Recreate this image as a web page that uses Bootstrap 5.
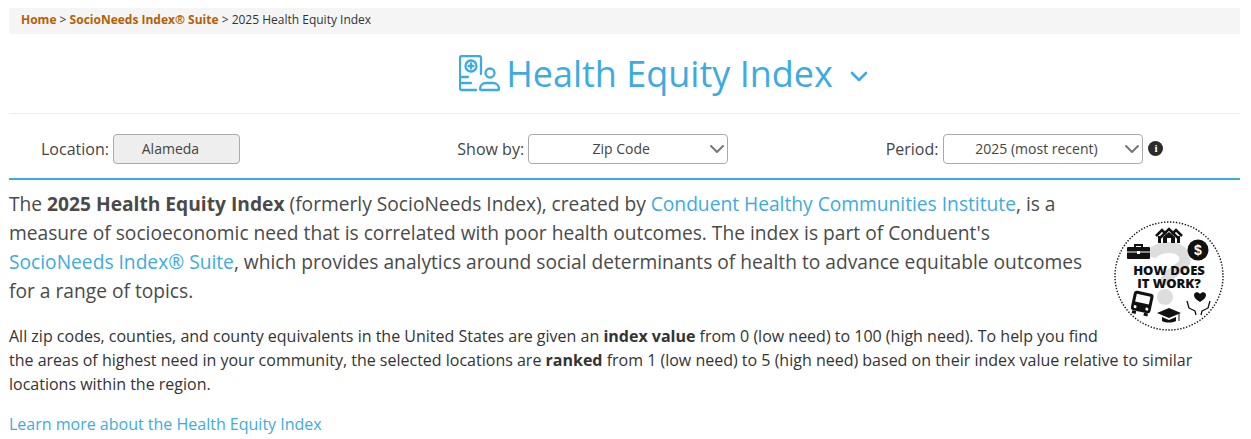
<!DOCTYPE html>
<html lang="en">
<head>
<meta charset="UTF-8">
<meta name="viewport" content="width=device-width, initial-scale=1.0">
<title>Health Equity Index</title>
<link href="https://cdn.jsdelivr.net/npm/bootstrap@5.3.0/dist/css/bootstrap.min.css" rel="stylesheet">
<script src="https://cdn.jsdelivr.net/npm/bootstrap@5.3.0/dist/js/bootstrap.bundle.min.js"></script>
<style>
body { font-family: "Open Sans", sans-serif; color: #444; background: #fff; overflow: hidden; }
a { color: #3dabe2; text-decoration: none; }
.page-wrap { padding: 8px 11px 0 9px; }
.crumbs { background: #f5f5f5; height: 26px; padding-left: 12px; font-size: 12px; color: #333; line-height: 24px; }
.crumbs a { color: #b45f06; font-weight: 700; }
.title-bar { height: 80px; border-bottom: 1px solid #eee; color: #3dabe2; font-size: 36px; padding: 0 0 0 78px; }
.title-bar svg.ttl-icon { margin-right: 6px; }
.title-bar svg.ttl-chev { margin-left: 17px; margin-top: 5px; }
.ctrl-row { height: 66px; border-bottom: 2px solid #3dabe2; padding-top: 20px; margin: 0; font-size: 16px; }
.ctrl-group { width: 33.333%; display: flex; align-items: flex-start; gap: 4px; line-height: 30px; }
.ctrl-one { padding-left: 32px; }
.ctrl-two { padding-left: 38px; }
.ctrl-three { padding-left: 56px; gap: 5px; }
.fake-box { height: 30px; border: 1px solid #aaa; border-radius: 4px; font-size: 14px; color: #444; line-height: 28px; text-align: center; position: relative; }
.box-loc { width: 127px; background: #eee; padding-right: 12px; }
.box-sel { background: #fff; padding-right: 14px; }
.box-show { width: 200px; }
.box-period { width: 200px; padding-right: 14px; }
.box-sel svg { position: absolute; right: 2px; top: 9px; }
.info-dot { width: 15px; height: 15px; border-radius: 50%; background: #2b2b2b; color: #fff; font-size: 11px; font-weight: 700; font-family: "Liberation Serif", serif; line-height: 15px; text-align: center; margin-top: 7px; }
.intro-wrap { padding-top: 9px; }
.badge-float { float: right; width: 135px; height: 155px; padding: 32px 16px 0 9px; }
.intro-big { font-size: 19.2px; line-height: 29px; margin: 0 0 19px; max-width: 1080px; color: #4a4a4a; }
.intro-small { font-size: 16px; line-height: 24px; margin: 0 0 15px; color: #333; }
.learn-link { font-size: 16px; line-height: 26px; }
</style>
</head>
<body>
<div class="page-wrap">
    <div class="crumbs"><a href="#">Home</a> &gt; <a href="#">SocioNeeds Index® Suite</a> &gt; 2025 Health Equity Index</div>

    <div class="title-bar d-flex align-items-center justify-content-center">
        <svg class="ttl-icon" width="41" height="37" viewBox="0 0 41 37" fill="none" stroke="#3dabe2" stroke-width="2.3" stroke-linecap="round" stroke-linejoin="round">
            <path d="M22 19V3a2 2 0 0 0-2-2H3a2 2 0 0 0-2 2v30a2 2 0 0 0 2 2h14"/>
            <circle cx="12" cy="11" r="5.5"/>
            <path d="M12 8.500v5M9.500 11h5"/>
            <path d="M1 22h8M1 28h11"/>
            <circle cx="31" cy="18" r="4.500"/>
            <path d="M22 35h17a1 1 0 0 0 1-1c0-4-3-6-6-6h-7c-3 0-6 2-6 6a1 1 0 0 0 1 1z"/>
        </svg>
        <span>Health Equity Index</span>
        <svg class="ttl-chev" width="18" height="11" viewBox="0 0 18 11" fill="none" stroke="#3dabe2" stroke-width="2.6" stroke-linecap="round" stroke-linejoin="round"><path d="M2 2l7 7 7-7"/></svg>
    </div>

    <div class="ctrl-row d-flex">
        <div class="ctrl-group ctrl-one">
            <span>Location:</span>
            <div class="fake-box box-loc">Alameda</div>
        </div>
        <div class="ctrl-group ctrl-two">
            <span>Show by:</span>
            <div class="fake-box box-sel box-show">Zip Code
                <svg width="16" height="10" viewBox="0 0 16 10" fill="none" stroke="#777" stroke-width="2" stroke-linecap="round" stroke-linejoin="round"><path d="M2 2l6 6 6-6"/></svg>
            </div>
        </div>
        <div class="ctrl-group ctrl-three">
            <span>Period:</span>
            <div class="fake-box box-sel box-period">2025 (most recent)
                <svg width="16" height="10" viewBox="0 0 16 10" fill="none" stroke="#777" stroke-width="2" stroke-linecap="round" stroke-linejoin="round"><path d="M2 2l6 6 6-6"/></svg>
            </div>
            <div class="info-dot">i</div>
        </div>
    </div>

    <div class="intro-wrap">
        <div class="badge-float">
            <svg width="110" height="110" viewBox="0 0 110 110">
                <circle cx="55" cy="55" r="54" fill="#fff" stroke="#111" stroke-width="1.4" stroke-dasharray="1.4 1.6"/>
                <!-- grey question mark behind the words -->
                <path d="M37 36c2-12 34-14 34 3 0 10-20 11-20 25" fill="none" stroke="#ddd" stroke-width="11"/>
                <circle cx="51" cy="76" r="8" fill="#ddd"/>
                <!-- houses -->
                <g stroke="#111" fill="none" stroke-width="2.500">
                    <path d="M42 15l6-6 4 4M68 15l-6-6-4 4"/>
                    <path d="M46 17l9-9 9 9"/>
                </g>
                <path d="M44 15h3v7h-3zM63 15h3v7h-3zM49 16l6-5 6 5v6h-4v-5h-4v5h-4z" fill="#111"/>
                <!-- briefcase -->
                <path d="M14 26h6v-3h9v3h6a1 1 0 0 1 1 1v10a1 1 0 0 1-1 1H14a1 1 0 0 1-1-1V27a1 1 0 0 1 1-1zm8 0h5v-1h-5z" fill="#111" fill-rule="evenodd"/>
                <path d="M13 31h23" stroke="#fff" stroke-width="1"/>
                <rect x="23" y="30" width="3" height="3" fill="#fff"/>
                <!-- dollar -->
                <circle cx="84" cy="29" r="10.500" fill="#111"/>
                <text x="84" y="34" text-anchor="middle" font-family="Liberation Sans, sans-serif" font-size="14" font-weight="700" fill="#fff">$</text>
                <text font-family="Open Sans, sans-serif" font-size="13" font-weight="800" fill="#111" text-anchor="middle"><tspan x="55" y="54">HOW DOES</tspan><tspan x="55" y="67">IT WORK?</tspan></text>
                <!-- bus -->
                <g transform="rotate(12 28 82)">
                    <rect x="18" y="71" width="20" height="20" rx="3" fill="#111"/>
                    <rect x="21" y="74" width="14" height="8" fill="#fff"/>
                    <circle cx="22" cy="87" r="1.500" fill="#fff"/><circle cx="34" cy="87" r="1.500" fill="#fff"/>
                    <rect x="20" y="91" width="4" height="3" fill="#111"/><rect x="32" y="91" width="4" height="3" fill="#111"/>
                </g>
                <!-- cap -->
                <path d="M43 92l12-5 12 5-12 5z" fill="#111"/>
                <path d="M48 96v4c4 2 10 2 14 0v-4l-7 3z" fill="#111"/>
                <path d="M65 93v7" stroke="#111" stroke-width="1"/>
                <!-- hands and heart -->
                <path d="M86 73c-2-3-6-2-6 1 0 3 3 5 6 7 3-2 6-4 6-7 0-3-4-4-6-1z" fill="#111"/>
                <path d="M73 80l2 7 6 3 1 4M96 80l-2 7-6 3-1 4" fill="none" stroke="#111" stroke-width="1.300" stroke-linejoin="round"/>
            </svg>
        </div>
        <p class="intro-big">The <strong>2025 Health Equity Index</strong> (formerly SocioNeeds Index), created by <a href="#">Conduent Healthy Communities Institute</a>, is a measure of socioeconomic need that is correlated with poor health outcomes. The index is part of Conduent's <a href="#">SocioNeeds Index® Suite</a>, which provides analytics around social determinants of health to advance equitable outcomes for a range of topics.</p>
        <p class="intro-small">All zip codes, counties, and county equivalents in the United States are given an <strong>index value</strong> from 0 (low need) to 100 (high need). To help you find the areas of highest need in your community, the selected locations are <strong>ranked</strong> from 1 (low need) to 5 (high need) based on their index value relative to similar locations within the region.</p>
        <a class="learn-link" href="#">Learn more about the Health Equity Index</a>
    </div>
</div>
</body>
</html>
